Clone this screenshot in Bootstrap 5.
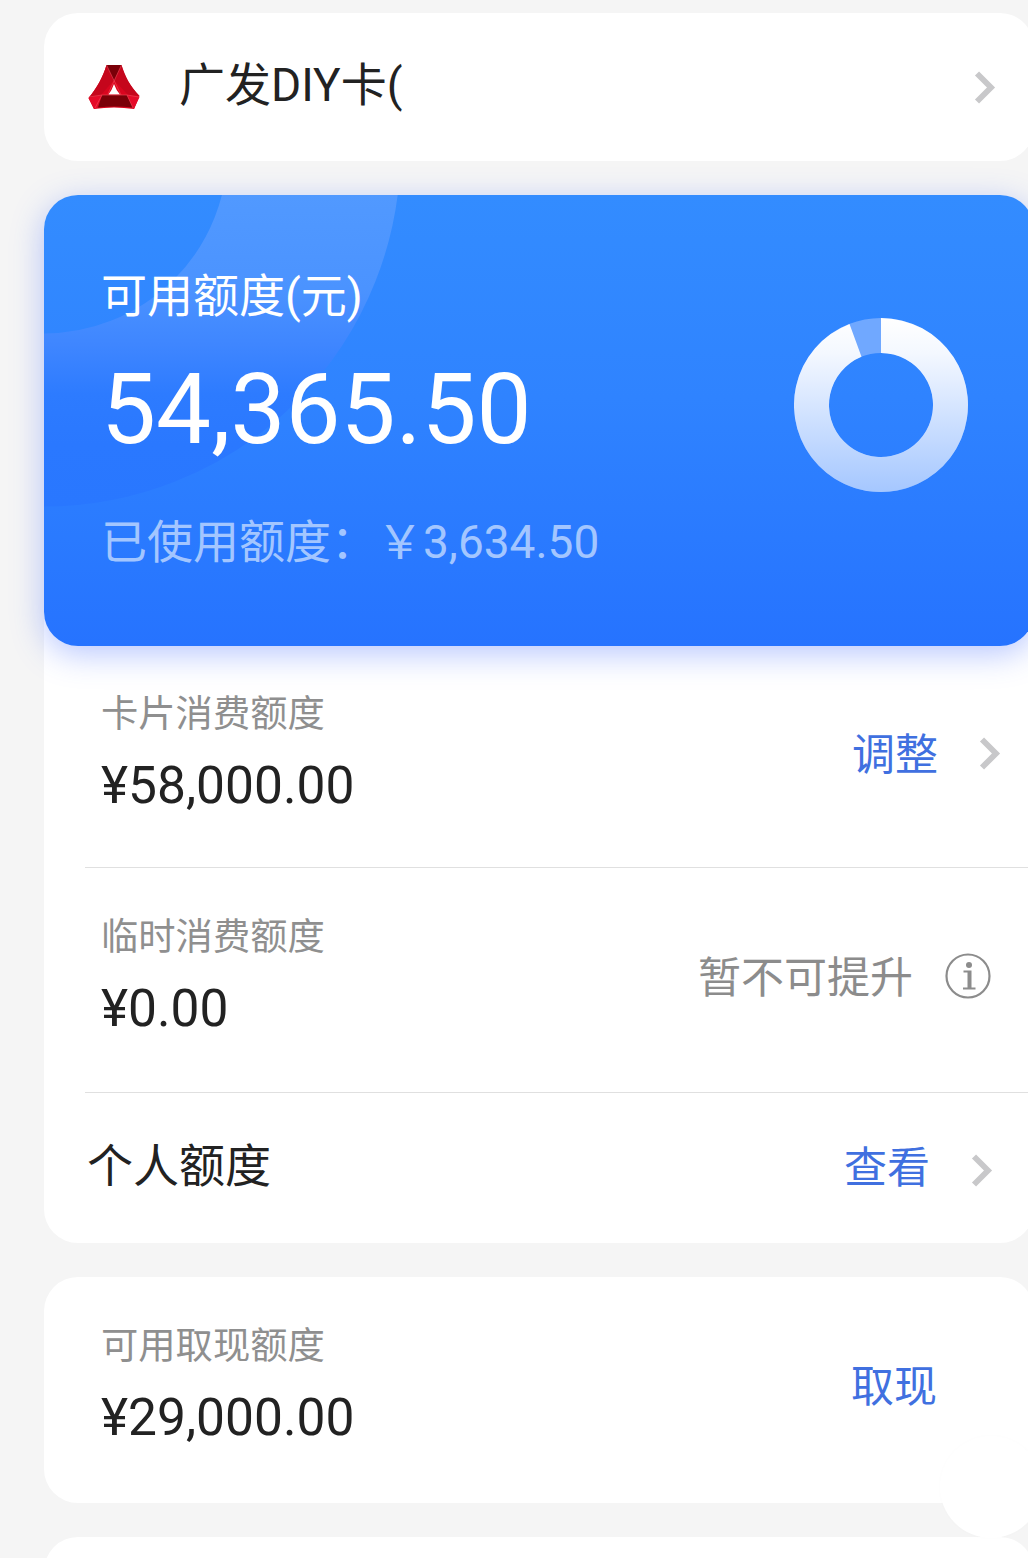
<!DOCTYPE html>
<html lang="zh-CN">
<head>
<meta charset="utf-8">
<meta name="viewport" content="width=device-width, initial-scale=1">
<title>额度管理</title>
<link href="https://cdn.jsdelivr.net/npm/bootstrap@5.3.0/dist/css/bootstrap.min.css" rel="stylesheet">
<style>
body{background:#f5f5f5;color:#222;font-family:Roboto,"Noto Sans CJK SC",sans-serif;height:1558px}
.screen{width:1028px;height:1558px;padding:13px 0 0 44px}
.stack{width:990px;gap:34px}
.panel{background:#fff;border-radius:34px}
.bank{height:148px;padding:0 38px 0 44px}
.bank-name{font-size:46px;line-height:60px}
.bank .bank-name{margin:0 0 4px 39px}
.chev{fill:none;stroke:#c8c8ca;stroke-width:5.8}
.credit{height:451px;border-radius:34px;background:linear-gradient(#338cff,#2f83ff 45%,#2673ff);box-shadow:0 8px 32px rgba(58,100,255,.36);padding:71px 66px 0 57px;color:#fff;z-index:1}
.rings{top:0;left:0;border-radius:34px 0 0 34px}
.credit-title{font-size:46px;line-height:60px}
.credit-sum{font-size:98px;line-height:110px;margin-top:29px}
.credit-used{font-size:46px;line-height:60px;margin-top:47px;color:#a3c6ff}
.donut{margin-top:52px}
.limits{margin-top:-40px;padding-top:40px;border-radius:0 0 34px 34px;height:637px}
.limit-row{padding:46px 33px 0 16px;margin-left:41px;height:225px;border-bottom:1px solid #e0e0e0}
.limit-row.first{height:222px;padding-top:45px}
.limit-row.wide-end{padding-right:43px}
.person-row{padding:43px 41px 0 43px}
.cash{height:226px;padding:46px 97px 0 57px}
.cap{font-size:37.3px;line-height:46px;color:#8f8f8f}
.sum{font-size:51.5px;line-height:60px;margin-top:19px}
.act{font-size:43px;line-height:56px;color:#4070e0}
.muted-act{color:#8c8c8c}
.side{height:56px;margin-top:36px}
.gap-act{gap:41px}
.gap-info{gap:32px}
.bubble{width:102px;height:102px;left:940px;top:1436px;background:#fff;box-shadow:0 0 4px rgba(0,0,0,.015)}
</style>
</head>
<body class="overflow-hidden">
<main class="screen position-relative overflow-hidden">
<div class="stack d-flex flex-column">
  <section class="panel bank d-flex align-items-center flex-shrink-0">
    <svg width="52" height="46" viewBox="0 0 52 46">
      <path fill="#d9061f" d="M18.500 1h15C36 12 42 22 51.500 32L46 45q-20-3-40 0L.500 34C9 24 15 13 18.500 1z"/>
      <path fill="#c5061c" d="M18.500 1C15 13 9 24 .500 34L13 31 26 16zM33.500 1C37 12 42 22 51.500 32L40 31 26 16z"/>
      <path fill="#7a0008" d="M18.500 1h15L26 17zM14 31h25l6 12.500q-19-2-35 0z"/>
      <path fill="#e50a28" d="M.500 34 14 31 9 44l-3 1zM51.500 33 39 31l6 13 1 1z"/>
      <path fill="#fff" d="M26 20q2 6 6 10.500H20.500Q24 26 26 20z"/>
      <path fill="none" stroke="#f2495a" stroke-width=".6" d="M18.500 1 33 31M33.500 1 20 30M1 33l13-2h25l12 2M14 31 7 44M39 31l6 13"/>
    </svg>
    <div class="bank-name">广发DIY卡(</div>
    <svg class="ms-auto" width="22" height="34" viewBox="0 0 22 34"><path class="chev" d="M3 3.500 17 17.500 3 31.500"/></svg>
  </section>
  <div class="flex-shrink-0">
    <section class="credit position-relative d-flex justify-content-between">
      <svg class="rings position-absolute" width="400" height="451" viewBox="0 0 400 451">
        <defs><linearGradient id="arc" gradientUnits="userSpaceOnUse" x1="0" y1="0" x2="0" y2="312"><stop offset="0" stop-color="#5199ff"/><stop offset=".3" stop-color="#4b93ff"/><stop offset=".48" stop-color="#3f86ff"/><stop offset=".64" stop-color="#2d7bff"/><stop offset=".8" stop-color="#2a78ff"/><stop offset="1" stop-color="#2977ff"/></linearGradient></defs>
        <circle cx="0" cy="-45" r="270" fill="none" stroke="url(#arc)" stroke-width="173"/>
      </svg>
      <div class="position-relative">
        <div class="credit-title">可用额度(元)</div>
        <div class="credit-sum">54,365.50</div>
        <div class="credit-used">已使用额度：￥3,634.50</div>
      </div>
      <svg class="donut" width="174" height="174" viewBox="0 0 174 174">
        <defs><linearGradient id="ring" gradientUnits="userSpaceOnUse" x1="0" y1="0" x2="0" y2="174"><stop offset="0" stop-color="#fff"/><stop offset=".2" stop-color="#f4f8ff"/><stop offset="1" stop-color="#a5c7ff"/></linearGradient></defs>
        <circle cx="87" cy="87" r="69.500" fill="none" stroke="#70a8ff" stroke-width="35"/>
        <path fill="url(#ring)" d="M87 0A87 87 0 1 1 55.500 5.900L67.500 38.800A52 52 0 1 0 87 35z"/>
      </svg>
    </section>
    <section class="panel limits">
      <div class="limit-row first d-flex justify-content-between">
        <div><div class="cap">卡片消费额度</div><div class="sum">¥58,000.00</div></div>
        <div class="side gap-act d-flex align-items-center"><span class="act">调整</span><svg class="mb-1" width="22" height="34" viewBox="0 0 22 34"><path class="chev" d="M3 3.500 17 17.500 3 31.500"/></svg></div>
      </div>
      <div class="limit-row wide-end d-flex justify-content-between">
        <div><div class="cap">临时消费额度</div><div class="sum">¥0.00</div></div>
        <div class="side gap-info d-flex align-items-center"><span class="act muted-act">暂不可提升</span>
          <svg class="mb-1" width="46" height="46" viewBox="0 0 46 46"><circle cx="23" cy="23" r="21.500" fill="none" stroke="#8c8c8c" stroke-width="2.200"/><circle cx="24" cy="12" r="3" fill="#8c8c8c"/><path d="M18.500 17.500H26.500V34.500H30.500V36.500H18V34.500H22.500V19.500H18.500z" fill="#8c8c8c"/></svg></div>
      </div>
      <div class="person-row d-flex justify-content-between">
        <div class="bank-name">个人额度</div>
        <div class="gap-act d-flex align-items-center"><span class="act mt-1">查看</span><svg class="mt-2" width="22" height="34" viewBox="0 0 22 34"><path class="chev" d="M3 3.500 17 17.500 3 31.500"/></svg></div>
      </div>
    </section>
  </div>
  <section class="panel cash d-flex justify-content-between flex-shrink-0">
    <div><div class="cap">可用取现额度</div><div class="sum">¥29,000.00</div></div>
    <div class="side d-flex align-items-center"><span class="act">取现</span></div>
  </section>
  <section class="panel flex-shrink-0" style="height:90px"></section>
</div>
<div class="bubble position-absolute rounded-circle"></div>
</main>
<script src="https://cdn.jsdelivr.net/npm/bootstrap@5.3.0/dist/js/bootstrap.bundle.min.js"></script>
</body>
</html>
